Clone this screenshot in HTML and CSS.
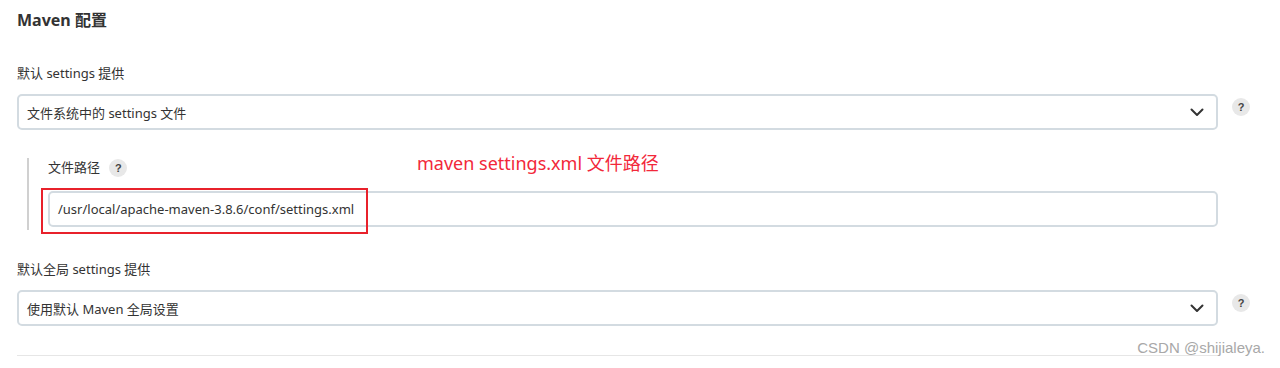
FILE: index.html
```html
<!DOCTYPE html>
<html lang="zh">
<head>
<meta charset="utf-8">
<link rel="stylesheet" href="styles.css">
</head>
<body>
<div class="page">
  <h2 class="title">Maven 配置</h2>

  <div class="label label1">默认 settings 提供</div>
  <div class="row">
    <div class="select">
      <span>文件系统中的 settings 文件</span>
      <svg class="chev" width="14" height="9" viewBox="0 0 14 9"><path d="M1.5 1.5 L7 7 L12.5 1.5" fill="none" stroke="#333" stroke-width="2" stroke-linecap="round" stroke-linejoin="round"/></svg>
    </div>
    <div class="help-cell"><span class="help">?</span></div>
  </div>

  <div class="nested">
    <div class="label inner-label">文件路径 <span class="help small">?</span></div>
    <div class="row">
      <div class="input">/usr/local/apache-maven-3.8.6/conf/settings.xml</div>
      <div class="help-cell"></div>
    </div>
    <div class="redbox"></div>
    <div class="note">maven settings.xml 文件路径</div>
  </div>

  <div class="label label2">默认全局 settings 提供</div>
  <div class="row">
    <div class="select">
      <span>使用默认 Maven 全局设置</span>
      <svg class="chev" width="14" height="9" viewBox="0 0 14 9"><path d="M1.5 1.5 L7 7 L12.5 1.5" fill="none" stroke="#333" stroke-width="2" stroke-linecap="round" stroke-linejoin="round"/></svg>
    </div>
    <div class="help-cell"><span class="help">?</span></div>
  </div>

  <div class="sep"></div>
  <div class="watermark">CSDN @shijialeya.</div>
</div>
</body>
</html>
```

FILE: styles.css
```css
* { box-sizing: border-box; }
html, body { margin: 0; padding: 0; background: #fff; }
body {
  font-family: "Noto Sans", "Noto Sans CJK SC", sans-serif;
  color: #333;
  width: 1280px;
  height: 368px;
  overflow: hidden;
}
.page {
  position: relative;
  padding: 9px 16px 0 17px;
  height: 368px;
}
.title {
  margin: 0;
  font-size: 16px;
  font-weight: 700;
  line-height: 22px;
  color: #333;
}
.label {
  font-size: 13px;
  line-height: 18px;
  margin-bottom: 12px;
  color: #333;
}
.label1 { margin-top: 33px; }
.label2 { margin-top: 30px; }
.row {
  display: flex;
  align-items: center;
}
.select, .input {
  flex: 1;
  height: 36px;
  border: 2px solid #d3dbe1;
  border-radius: 5px;
  display: flex;
  align-items: center;
  justify-content: space-between;
  padding: 0 12px 0 8px;
  font-size: 13px;
  color: #333;
}
.help-cell {
  width: 46px;
  display: flex;
  justify-content: center;
}
.help {
  width: 18px;
  height: 18px;
  border-radius: 50%;
  background: #e8e8e8;
  color: #444;
  font-size: 11px;
  font-weight: 700;
  display: inline-flex;
  align-items: center;
  justify-content: center;
  font-family: "Liberation Sans", sans-serif;
  margin-top: -10px;
}
.help.small { margin: 0 0 0 6px; vertical-align: middle; position: relative; top: -1px; }
.nested {
  position: relative;
  margin: 28px 0 0 10px;
  border-left: 2px solid #d0d0d0;
  padding: 0 0 0 19px;
  height: 72px;
}
.inner-label {
  margin-top: 0;
  margin-bottom: 13px;
}
.redbox {
  position: absolute;
  left: 12px;
  top: 30px;
  width: 327px;
  height: 46px;
  border: 2px solid #e8212b;
}
.note {
  position: absolute;
  left: 388px;
  top: -7px;
  font-size: 18px;
  line-height: 24px;
  color: #f2283a;
}
.sep {
  margin-top: 29px;
  height: 1px;
  background: #e6e6e6;
  width: 1201px;
}
.watermark {
  position: absolute;
  right: 15px;
  top: 339px;
  font-family: "Liberation Sans", sans-serif;
  font-size: 15px;
  color: #a8a8a8;
}
```
